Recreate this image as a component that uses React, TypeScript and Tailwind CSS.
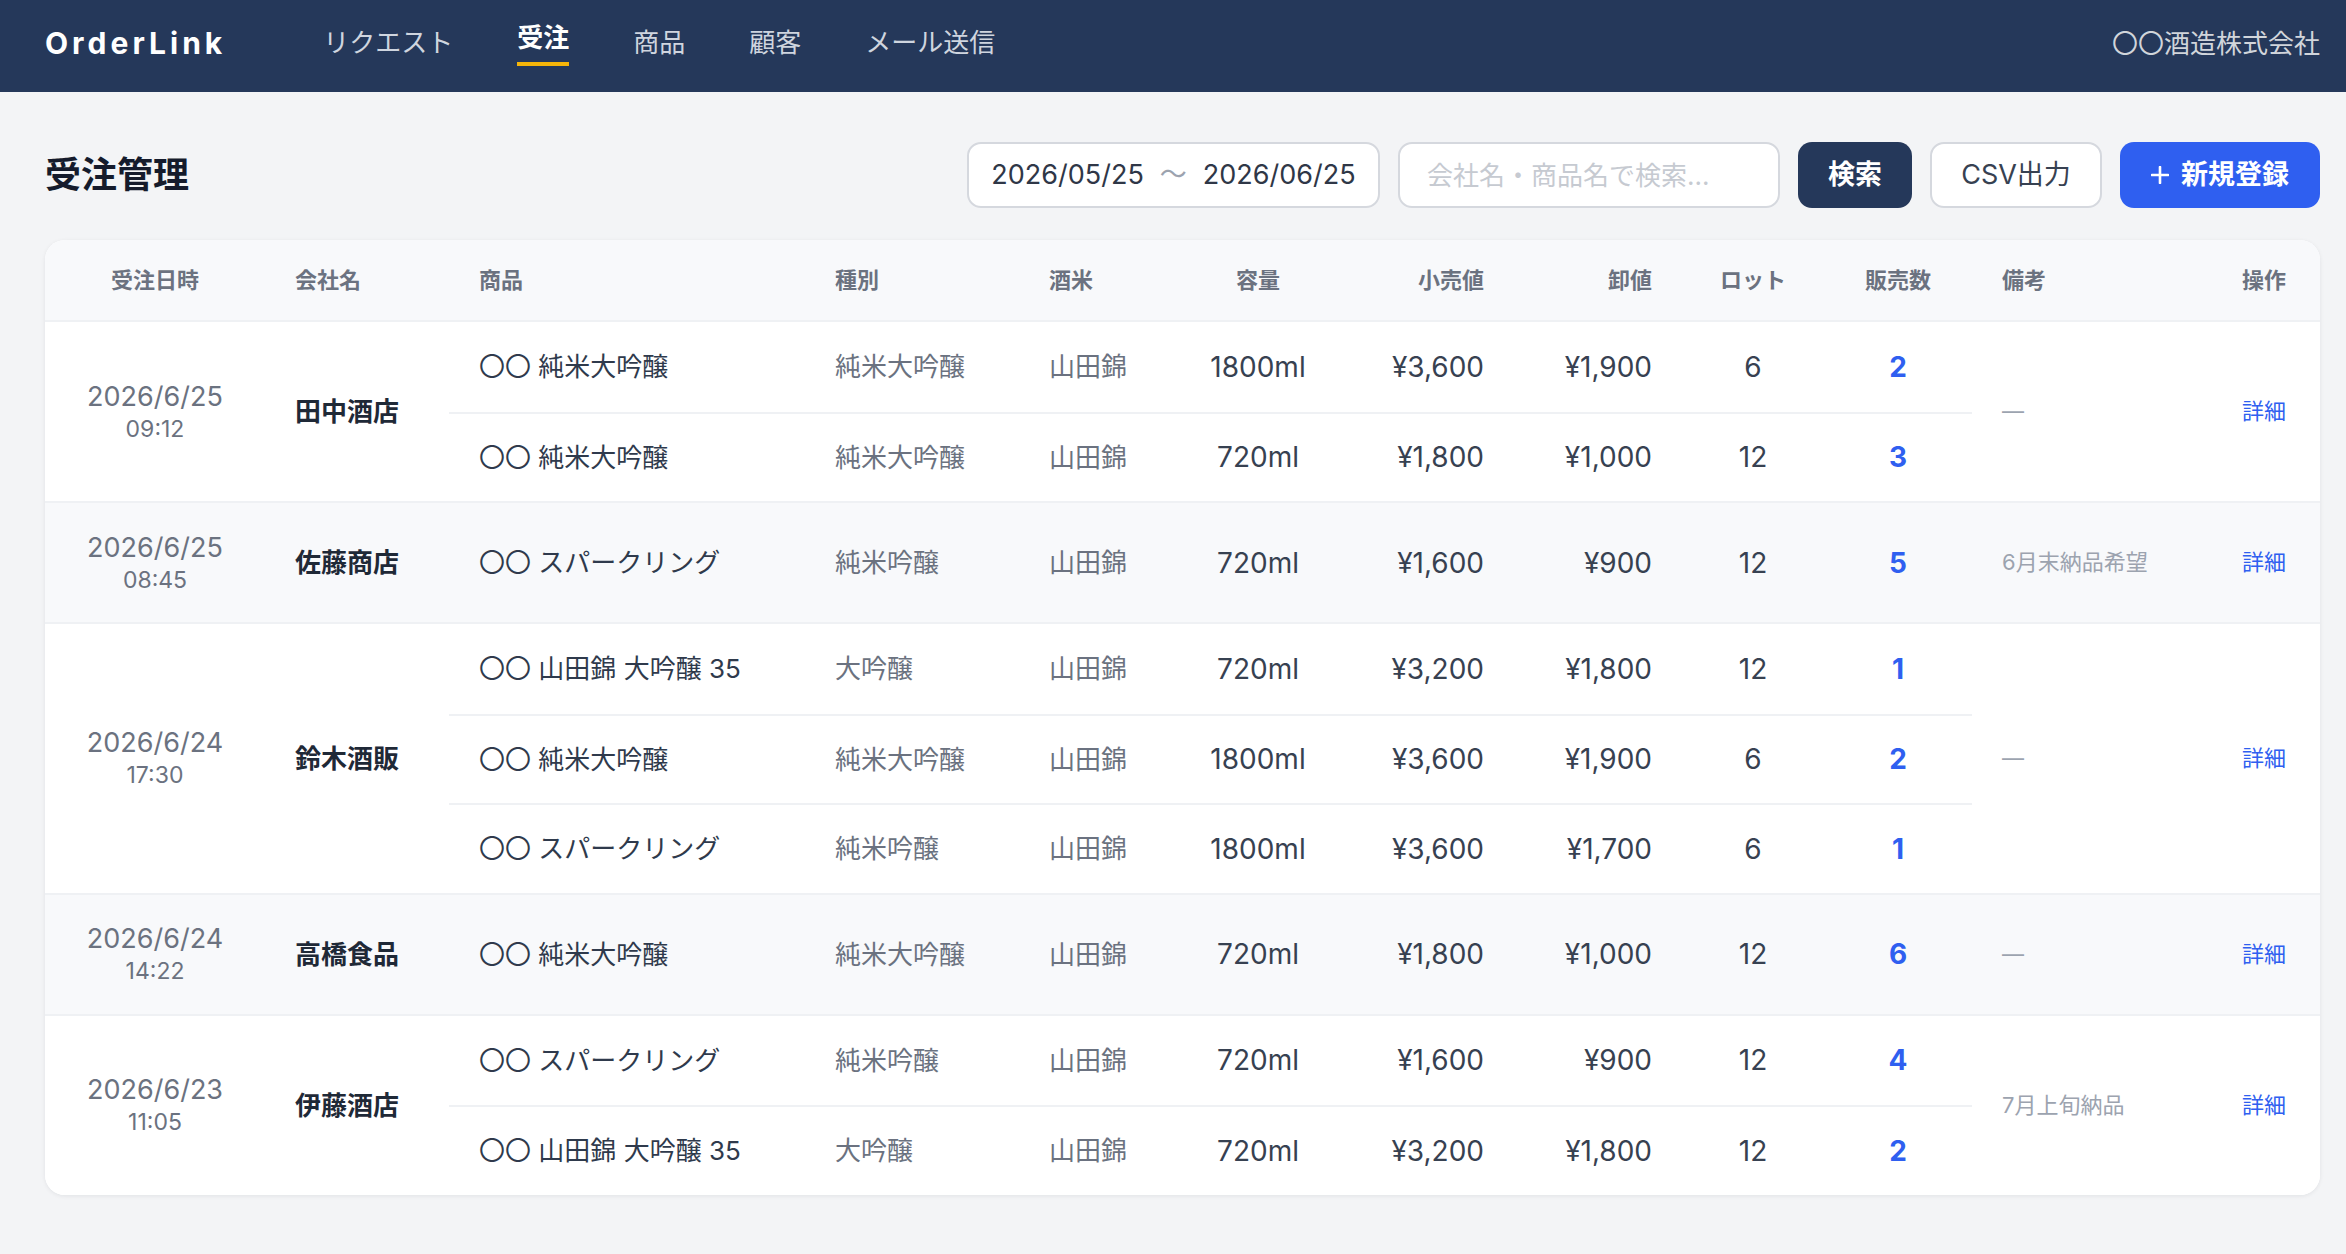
import React from 'react';

interface Item {
  name: string;
  kind: string;
  rice: string;
  volume: string;
  retail: string;
  wholesale: string;
  lot: string;
  qty: string;
}

interface Order {
  date: string;
  time: string;
  company: string;
  note: string;
  items: Item[];
}

const orders: Order[] = [
  {
    date: '2026/6/25',
    time: '09:12',
    company: '田中酒店',
    note: '—',
    items: [
      { name: '〇〇 純米大吟醸', kind: '純米大吟醸', rice: '山田錦', volume: '1800ml', retail: '¥3,600', wholesale: '¥1,900', lot: '6', qty: '2' },
      { name: '〇〇 純米大吟醸', kind: '純米大吟醸', rice: '山田錦', volume: '720ml', retail: '¥1,800', wholesale: '¥1,000', lot: '12', qty: '3' },
    ],
  },
  {
    date: '2026/6/25',
    time: '08:45',
    company: '佐藤商店',
    note: '6月末納品希望',
    items: [
      { name: '〇〇 スパークリング', kind: '純米吟醸', rice: '山田錦', volume: '720ml', retail: '¥1,600', wholesale: '¥900', lot: '12', qty: '5' },
    ],
  },
  {
    date: '2026/6/24',
    time: '17:30',
    company: '鈴木酒販',
    note: '—',
    items: [
      { name: '〇〇 山田錦 大吟醸 35', kind: '大吟醸', rice: '山田錦', volume: '720ml', retail: '¥3,200', wholesale: '¥1,800', lot: '12', qty: '1' },
      { name: '〇〇 純米大吟醸', kind: '純米大吟醸', rice: '山田錦', volume: '1800ml', retail: '¥3,600', wholesale: '¥1,900', lot: '6', qty: '2' },
      { name: '〇〇 スパークリング', kind: '純米吟醸', rice: '山田錦', volume: '1800ml', retail: '¥3,600', wholesale: '¥1,700', lot: '6', qty: '1' },
    ],
  },
  {
    date: '2026/6/24',
    time: '14:22',
    company: '高橋食品',
    note: '—',
    items: [
      { name: '〇〇 純米大吟醸', kind: '純米大吟醸', rice: '山田錦', volume: '720ml', retail: '¥1,800', wholesale: '¥1,000', lot: '12', qty: '6' },
    ],
  },
  {
    date: '2026/6/23',
    time: '11:05',
    company: '伊藤酒店',
    note: '7月上旬納品',
    items: [
      { name: '〇〇 スパークリング', kind: '純米吟醸', rice: '山田錦', volume: '720ml', retail: '¥1,600', wholesale: '¥900', lot: '12', qty: '4' },
      { name: '〇〇 山田錦 大吟醸 35', kind: '大吟醸', rice: '山田錦', volume: '720ml', retail: '¥3,200', wholesale: '¥1,800', lot: '12', qty: '2' },
    ],
  },
];

const navItems = ['リクエスト', '受注', '商品', '顧客', 'メール送信'];

function PlusIcon() {
  return (
    <svg width="18" height="18" viewBox="0 0 18 18" fill="none">
      <path d="M9 1v16M1 9h16" stroke="white" strokeWidth="2.6" strokeLinecap="round" />
    </svg>
  );
}

function ItemRow({ item, first }: { item: Item; first: boolean }) {
  return (
    <div className={`flex flex-1 min-h-[89.5px] items-center text-[26px] ${first ? '' : 'border-t-2 border-[#eff1f4]'}`}>
      <div className="w-[356px] shrink-0 px-[30px] text-[#2f3a4c]">{item.name}</div>
      <div className="w-[214px] shrink-0 px-[30px] text-[#6b7280]">{item.kind}</div>
      <div className="w-[121px] shrink-0 pl-[30px] text-[#6b7280] whitespace-nowrap">{item.rice}</div>
      <div className="w-[236px] shrink-0 px-[30px] text-center text-[28px] text-[#374151]">{item.volume}</div>
      <div className="w-[138px] shrink-0 pr-[30px] text-right text-[28px] text-[#374151] whitespace-nowrap">{item.retail}</div>
      <div className="w-[168px] shrink-0 pr-[30px] text-right text-[28px] text-[#374151] whitespace-nowrap">{item.wholesale}</div>
      <div className="w-[142px] shrink-0 px-[30px] text-center text-[28px] text-[#374151]">{item.lot}</div>
      <div className="w-[148px] shrink-0 px-[30px] text-center text-[28px] font-bold text-[#2f5ff0]">{item.qty}</div>
    </div>
  );
}

export default function App() {
  return (
    <div className="min-h-screen bg-[#f3f4f6] font-['Inter','Noto_Sans_CJK_JP',sans-serif]">
      {/* top nav */}
      <header className="h-[92px] bg-[#25385a] flex items-center pl-[45px] pr-[26px] pb-[6px]">
        <div className="text-[30px] font-bold text-white tracking-[4px]">OrderLink</div>
        <nav className="ml-[97px] flex items-center gap-[64px] text-[26px]">
          {navItems.map((label) =>
            label === '受注' ? (
              <div key={label} className="flex flex-col items-center">
                <span className="leading-[36px] font-bold text-white">{label}</span>
                <span className="mt-[6px] h-[4px] w-full bg-[#f5b50a]" />
              </div>
            ) : (
              <span key={label} className="leading-[36px] text-[#cfd5df]">{label}</span>
            )
          )}
        </nav>
        <div className="ml-auto text-[26px] text-[#d1d5db]">〇〇酒造株式会社</div>
      </header>

      <main className="pl-[45px] pr-[26px] pt-[50px] pb-[40px]">
        {/* title + toolbar */}
        <div className="flex items-center justify-between">
          <h1 className="text-[36px] font-bold text-[#151b2c]">受注管理</h1>
          <div className="flex items-center gap-[18px] text-[27px]">
            <div className="w-[413px] h-[66px] flex items-center justify-center rounded-[14px] border-2 border-[#d5d8de] bg-white text-[#2f3747]">
              <span>2026/05/25</span>
              <span className="mx-[16px] text-[#9ca3af]">〜</span>
              <span>2026/06/25</span>
            </div>
            <div className="w-[382px] h-[66px] flex items-center rounded-[14px] border-2 border-[#d5d8de] bg-white pl-[27px] text-[26px] text-[#c6cad1]">
              会社名・商品名で検索...
            </div>
            <button className="w-[114px] h-[66px] rounded-[14px] bg-[#25385a] font-bold text-white">検索</button>
            <button className="w-[172px] h-[66px] rounded-[14px] border-2 border-[#d5d8de] bg-white text-[#374151]">CSV出力</button>
            <button className="w-[200px] h-[66px] rounded-[14px] bg-[#2f5ff0] font-bold text-white flex items-center justify-center gap-[12px]">
              <PlusIcon />
              <span>新規登録</span>
            </button>
          </div>
        </div>

        {/* table card */}
        <div className="mt-[32px] rounded-[20px] bg-white overflow-hidden shadow-[0_1px_4px_rgba(15,23,42,0.08)]">
          <div className="flex h-[82px] items-center bg-[#f8f9fb] border-b-2 border-[#eff1f4] text-[22px] font-bold text-[#6b7280]">
            <div className="w-[220px] shrink-0 px-[30px] text-center">受注日時</div>
            <div className="w-[184px] shrink-0 px-[30px]">会社名</div>
            <div className="w-[356px] shrink-0 px-[30px]">商品</div>
            <div className="w-[214px] shrink-0 px-[30px]">種別</div>
            <div className="w-[121px] shrink-0 pl-[30px]">酒米</div>
            <div className="w-[236px] shrink-0 px-[30px] text-center">容量</div>
            <div className="w-[138px] shrink-0 pr-[30px] text-right">小売値</div>
            <div className="w-[168px] shrink-0 pr-[30px] text-right">卸値</div>
            <div className="w-[142px] shrink-0 px-[30px] text-center">ロット</div>
            <div className="w-[148px] shrink-0 px-[30px] text-center">販売数</div>
            <div className="w-[228px] shrink-0 px-[30px]">備考</div>
            <div className="w-[120px] shrink-0 pr-[34px] text-right">操作</div>
          </div>

          {orders.map((order, i) => (
            <div
              key={i}
              className={`flex ${i > 0 ? 'border-t-2 border-[#eff1f4]' : ''} ${i % 2 === 1 ? 'bg-[#f8f9fb]' : 'bg-white'}`}
            >
              <div className="w-[220px] shrink-0 flex flex-col items-center justify-center py-[27.5px] text-[#6b7280]">
                <span className="text-[27px] leading-[34px]">{order.date}</span>
                <span className="text-[23px] leading-[30px]">{order.time}</span>
              </div>
              <div className="w-[184px] shrink-0 flex items-center px-[30px] text-[26px] font-semibold text-[#1f2937]">
                {order.company}
              </div>
              <div className="w-[1523px] shrink-0 flex flex-col">
                {order.items.map((item, j) => (
                  <ItemRow key={j} item={item} first={j === 0} />
                ))}
              </div>
              <div className="w-[228px] shrink-0 flex items-center px-[30px] text-[22px] text-[#9ca3af]">
                {order.note}
              </div>
              <div className="w-[120px] shrink-0 flex items-center justify-end pr-[34px] text-[22px] text-[#2f5ff0]">
                詳細
              </div>
            </div>
          ))}
        </div>
      </main>
    </div>
  );
}
